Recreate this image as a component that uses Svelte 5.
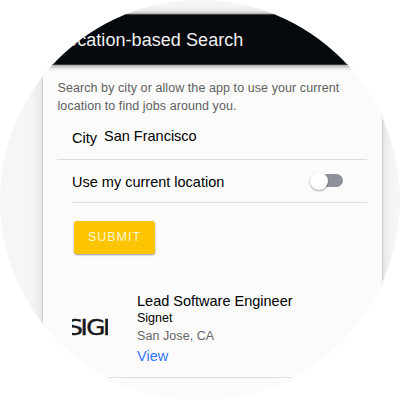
<script>
  const job = { title: 'Lead Software Engineer', company: 'Signet', place: 'San Jose, CA' };
  let city = $state('San Francisco');
  let useLocation = $state(false);
</script>

<main class="disc">
  <section class="card">
    <header><h1>Location-based Search</h1></header>
    <p class="intro">Search by city or allow the app to use your current<br />location to find jobs around you.</p>
    <div class="city"><span class="label">City</span><span class="value">{city}</span></div>
    <div class="row">
      <span>Use my current location</span>
      <button class="toggle" class:on={useLocation} aria-label="Use my current location" onclick={() => (useLocation = !useLocation)}><i></i></button>
    </div>
    <button class="submit">SUBMIT</button>
    <article>
      <svg class="logo" width="36" height="36" viewBox="0 0 36 36" aria-label="Signet">
        <text transform="scale(1.2 1)" x="-3.9 7.2 11.8 25.8" y="26">SIGI</text>
      </svg>
      <div class="details">
        <h2>{job.title}</h2>
        <div class="company">{job.company}</div>
        <div class="place">{job.place}</div>
        <a href="#view">View</a>
      </div>
    </article>
  </section>
</main>

<style>
  :global(body) { margin: 0; background: #fff; }
  * { box-sizing: border-box; }
  .disc {
    width: 400px; height: 400px; overflow: hidden;
    clip-path: circle(200px at 200px 200px);
    background: #f6f6f6; padding: 14px 17px 0 43px;
    font-family: "Liberation Sans", Arial, sans-serif; color: #000;
  }
  .card {
    width: 339.4px; height: 420px; background: #fbfbfb;
    box-shadow: 0 0 2px rgba(0,0,0,.3), 0 2px 14px rgba(0,0,0,.13);
  }
  header {
    height: 51px; padding: 14px 0 0 14px; background: #05090c;
    border-top: 1px solid #45484a; border-bottom: 1px solid #35383a;
    box-shadow: 0 1px 5px rgba(0,0,0,.5);
  }
  h1 { margin: 0; font-size: 18px; line-height: 22px; font-weight: 400; letter-spacing: .06px; color: #f0f0f0; white-space: nowrap; }
  .intro { margin: 0; height: 50px; padding: 14px 0 0 14.5px; font-size: 12.5px; line-height: 18px; letter-spacing: .075px; color: #606060; white-space: nowrap; }
  .city { height: 45px; margin: 0 15px 0 14px; padding: 12.4px 0 0 15px; border-bottom: 1px solid #dedede; display: flex; gap: 7px; font-size: 14.5px; line-height: 18px; }
  .label { padding-top: 1.5px; }
  .row { height: 43px; margin: 0 15px 0 29px; padding-right: 24.5px; border-bottom: 1px solid #dedede; display: flex; align-items: center; justify-content: space-between; font-size: 14.5px; padding-top: 2px; }
  .toggle { width: 32px; height: 13px; margin-top: -3px; padding: 0; border: 0; border-radius: 7px; background: #8f929b; display: flex; align-items: center; }
  .toggle i { width: 18px; height: 18px; margin-left: -1px; flex: none; border-radius: 50%; background: #fff; box-shadow: 0 1px 2px rgba(0,0,0,.3), 0 1px 3px rgba(0,0,0,.1); }
  .toggle.on { justify-content: flex-end; background: #478aff; }
  .submit { display: block; width: 81px; height: 33px; margin: 18px 0 0 31px; padding: 0 0 1px; border: 0; border-radius: 3px; background: #fdc500; color: #fff8d8; font: 12.5px "Liberation Sans", Arial, sans-serif; letter-spacing: 1px; box-shadow: 0 1px 2px rgba(0,0,0,.4); }
  article { height: 124px; margin-left: 29px; display: flex; border-bottom: 1px solid #dedede; }
  .logo { margin-top: 55px; overflow: hidden; flex: none; }
  .logo text { font: 20.6px "DejaVu Sans", sans-serif; fill: #15171a; stroke: #15171a; stroke-width: .4; }
  .details { margin: 38px 0 0 29px; }
  h2 { margin: 0; font-size: 14.5px; line-height: 18px; font-weight: 400; }
  .company { font-size: 12.5px; line-height: 17px; }
  .place { font-size: 12.5px; line-height: 19px; letter-spacing: .07px; color: #666; }
  a { display: block; color: #2f75ff; font-size: 14.5px; line-height: 20px; text-decoration: none; }
</style>
